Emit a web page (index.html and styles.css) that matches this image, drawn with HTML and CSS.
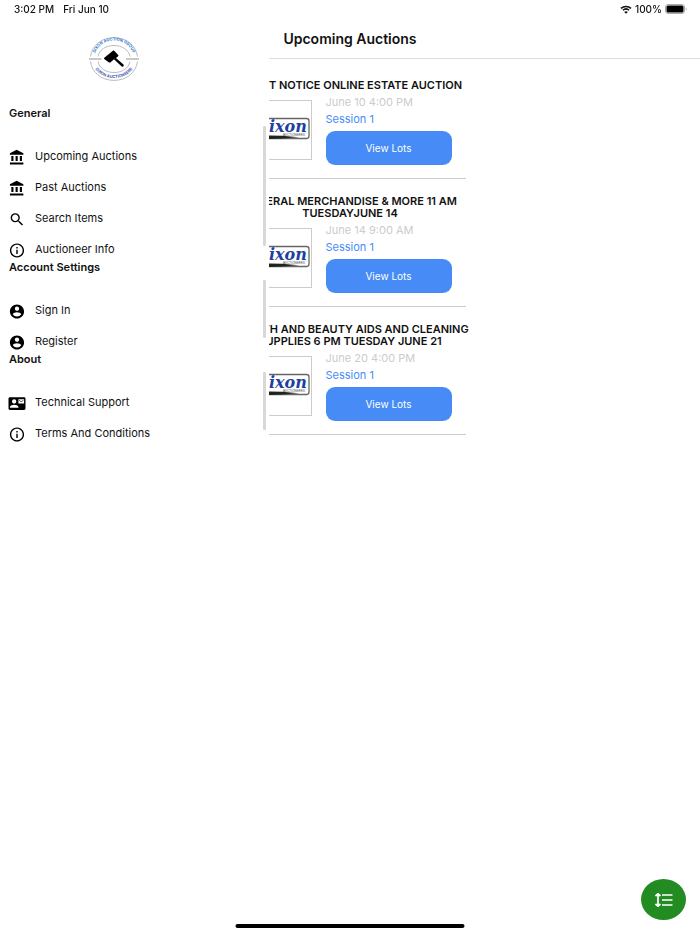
FILE: index.html
```html
<!DOCTYPE html>
<html lang="en">
  <head>
    <meta charset="UTF-8" />
    <title>Upcoming Auctions</title>
    <meta name="viewport" content="width=device-width, initial-scale=1.0" />
    <link rel="stylesheet" href="styles.css">
  </head>
  <body>
    <!-- shared icons -->
    <svg class="sprite" aria-hidden="true">
      <symbol id="icon-bank" viewBox="0 0 24 24">
        <path d="M4 10v7h3v-7H4zm6 0v7h3v-7h-3zM2 22h19v-3H2v3zm14-12v7h3v-7h-3zM11.500 1L2 6v2h19V6l-9.500-5z" />
      </symbol>
      <symbol id="icon-search" viewBox="0 0 24 24">
        <path d="M15.500 14h-.79l-.28-.27A6.470 6.470 0 0 0 16 9.500 6.500 6.500 0 1 0 9.500 16c1.610 0 3.090-.59 4.230-1.570l.27.28v.79l5 4.990L20.490 19l-4.990-5zm-6 0C7.010 14 5 11.990 5 9.500S7.010 5 9.500 5 14 7.010 14 9.500 11.990 14 9.500 14z" />
      </symbol>
      <symbol id="icon-info" viewBox="0 0 24 24">
        <path d="M11 7h2v2h-2zm0 4h2v6h-2zm1-9C6.480 2 2 6.480 2 12s4.480 10 10 10 10-4.480 10-10S17.520 2 12 2zm0 18c-4.410 0-8-3.590-8-8s3.590-8 8-8 8 3.590 8 8-3.590 8-8 8z" />
      </symbol>
      <symbol id="icon-account" viewBox="0 0 24 24">
        <path d="M12 2C6.480 2 2 6.480 2 12s4.480 10 10 10 10-4.480 10-10S17.520 2 12 2zm0 3c1.660 0 3 1.340 3 3s-1.340 3-3 3-3-1.340-3-3 1.340-3 3-3zm0 14.200a7.200 7.200 0 0 1-6-3.220c.03-1.990 4-3.080 6-3.080 1.990 0 5.970 1.090 6 3.080a7.200 7.200 0 0 1-6 3.220z" />
      </symbol>
      <symbol id="icon-contact" viewBox="0 0 24 24">
        <path d="M22 3H2C.9 3 0 3.900 0 5v14c0 1.100.9 2 2 2h20c1.100 0 1.990-.9 1.990-2L24 5c0-1.100-.9-2-2-2zM8 6c1.660 0 3 1.340 3 3s-1.340 3-3 3-3-1.340-3-3 1.340-3 3-3zm6 12H2v-1c0-2 4-3.100 6-3.100s6 1.100 6 3.100v1zm8-6h-8V6h8v6zm-1-5l-3 2-3-2v1l3 2 3-2V7z" />
      </symbol>
      <symbol id="dixon-logo" viewBox="0 0 68 58">
        <rect x="1" y="17.500" width="65" height="20" rx="2.500" fill="#fff" stroke="#666" stroke-width="1.300" />
        <text x="12" y="31" class="dixon-name">Dixon</text>
        <text x="40" y="34.500" class="dixon-sub">AUCTIONEERS</text>
        <path d="M5 35.200l22-.7 12 .3 17 1.400-17 1.400-12 .3-22-.7z" fill="#222" />
      </symbol>
    </svg>

    <header class="status-bar">
      <div class="status-left">
        <span>3:02 PM</span>
        <span>Fri Jun 10</span>
      </div>
      <div class="status-right">
        <svg class="wifi" viewBox="0 0 12 9" aria-hidden="true">
          <path d="M1 3.400a7.300 7.300 0 0 1 10 0M2.900 5.300a4.600 4.600 0 0 1 6.200 0" fill="none" stroke="#111" stroke-width="1.500" />
          <path d="M6 8.800L4.200 7a2.600 2.600 0 0 1 3.600 0z" fill="#111" />
        </svg>
        <span>100%</span>
        <svg class="battery" viewBox="0 0 22 10" aria-hidden="true">
          <rect x="0.500" y="0.500" width="19" height="9" rx="2.500" fill="#fff" stroke="#aaa" />
          <rect x="1.500" y="1.500" width="17" height="7" rx="1.500" fill="#000" />
          <path d="M20.800 3.500v3c1-.4 1-2.600 0-3z" fill="#999" />
        </svg>
      </div>
    </header>

    <aside class="drawer">
      <svg class="brand" viewBox="0 0 50 44" role="img" aria-label="Dixon Auction Group">
        <g fill="none" stroke="#aaa" stroke-width="0.800">
          <path d="M1.500 19.500C3 8 13 .6 25 .6S47 8 48.500 19.500" />
          <path d="M1.500 24.500C3 36 13 43.400 25 43.400S47 36 48.500 24.500" />
          <path d="M9 19.500C10.500 12.500 17 8.500 25 8.500s14.500 4 16 11" />
          <path d="M9 24.500C10.500 31.500 17 35.500 25 35.500s14.500-4 16-11" />
          <path d="M0 22h12.500M37 22h13" stroke="#777" />
        </g>
        <path id="arc-top" d="M5.500 21A19.500 17.500 0 0 1 44.500 21" fill="none" />
        <path id="arc-bottom" d="M3.500 23A21.500 18 0 0 0 46.500 23" fill="none" />
        <text class="brand-top" text-anchor="middle"><textPath href="#arc-top" startOffset="50%">DIXON AUCTION GROUP</textPath></text>
        <text class="brand-bottom" text-anchor="middle"><textPath href="#arc-bottom" startOffset="50%">DIXON AUCTIONEERS</textPath></text>
        <path d="M15 21l9.500-7.800 1.200 1 2.800 3 1 1-.8 1.500-1.800 1.300 7.300 6.200c1.500 1.400-.3 3.400-1.800 2l-7.400-7-3.700 3.200-1.300.2-4.800-3.600z" fill="#000" />
      </svg>

      <nav class="menu">
        <h2 class="menu-title">General</h2>
        <ul class="menu-list">
          <li><a href="#upcoming"><svg class="icon"><use href="#icon-bank" /></svg>Upcoming Auctions</a></li>
          <li><a href="#past"><svg class="icon"><use href="#icon-bank" /></svg>Past Auctions</a></li>
          <li><a href="#search"><svg class="icon"><use href="#icon-search" /></svg>Search Items</a></li>
          <li><a href="#info"><svg class="icon"><use href="#icon-info" /></svg>Auctioneer Info</a></li>
        </ul>

        <h2 class="menu-title">Account Settings</h2>
        <ul class="menu-list">
          <li><a href="#signin"><svg class="icon"><use href="#icon-account" /></svg>Sign In</a></li>
          <li><a href="#register"><svg class="icon"><use href="#icon-account" /></svg>Register</a></li>
        </ul>

        <h2 class="menu-title">About</h2>
        <ul class="menu-list">
          <li><a href="#support"><svg class="icon"><use href="#icon-contact" /></svg>Technical Support</a></li>
          <li><a href="#terms"><svg class="icon"><use href="#icon-info" /></svg>Terms And Conditions</a></li>
        </ul>
      </nav>
    </aside>

    <main class="page">
      <h1 class="page-title">Upcoming Auctions</h1>

      <div class="auction-list">
        <article class="auction">
          <h2 class="auction-title">SHORT NOTICE ONLINE ESTATE AUCTION</h2>
          <div class="auction-body">
            <div class="thumb"><svg><use href="#dixon-logo" /></svg></div>
            <div class="details">
              <p class="date">June 10 4:00 PM</p>
              <p class="session">Session 1</p>
              <button type="button" class="view-btn">View Lots</button>
            </div>
          </div>
        </article>

        <article class="auction">
          <h2 class="auction-title">GENERAL MERCHANDISE &amp; MORE 11 AM<br />TUESDAYJUNE 14</h2>
          <div class="auction-body">
            <div class="thumb"><svg><use href="#dixon-logo" /></svg></div>
            <div class="details">
              <p class="date">June 14 9:00 AM</p>
              <p class="session">Session 1</p>
              <button type="button" class="view-btn">View Lots</button>
            </div>
          </div>
        </article>

        <article class="auction">
          <h2 class="auction-title">HEALTH AND BEAUTY AIDS AND CLEANING<br />SUPPLIES 6 PM TUESDAY JUNE 21</h2>
          <div class="auction-body">
            <div class="thumb"><svg><use href="#dixon-logo" /></svg></div>
            <div class="details">
              <p class="date">June 20 4:00 PM</p>
              <p class="session">Session 1</p>
              <button type="button" class="view-btn">View Lots</button>
            </div>
          </div>
        </article>
      </div>
    </main>

    <button type="button" class="fab" aria-label="Sort">
      <svg viewBox="0 0 18 14" fill="none" stroke="#fff" stroke-width="1.700" aria-hidden="true">
        <path d="M3 1v12M.5 3L3 .8 5.500 3M.5 11L3 13.200 5.500 11M7 2h10.500M7 7h10.500M7 12h10.500" />
      </svg>
    </button>
    <div class="home-indicator"></div>
  </body>
</html>
```

FILE: styles.css
```css
* {
  box-sizing: border-box;
}
body {
  margin: 0;
  min-height: 100vh;
  font-family: Inter, "Liberation Sans", sans-serif;
  font-size: 11px;
  color: #111;
  background-color: #fff;
}
h1,
h2,
p,
ul {
  margin: 0;
  padding: 0;
}
.sprite {
  position: absolute;
  width: 0;
  height: 0;
}

/* status bar */
.status-bar {
  position: relative;
  z-index: 3;
  display: flex;
  justify-content: space-between;
  align-items: center;
  height: 18px;
  padding: 0 13px 0 14px;
  font-size: 10px;
  font-weight: 500;
}
.status-left {
  display: flex;
  gap: 9px;
}
.status-right {
  display: flex;
  align-items: center;
  gap: 3px;
}
.wifi {
  width: 12px;
  height: 9px;
}
.battery {
  width: 22px;
  height: 10px;
}

/* drawer lies over the page */
.drawer {
  position: fixed;
  top: 0;
  bottom: 0;
  left: 0;
  z-index: 2;
  width: 269px;
  padding-top: 37px;
  background-color: #fff;
}
.brand {
  display: block;
  width: 50px;
  height: 44px;
  margin: 0 0 24px 89px;
  overflow: visible;
}
.brand text {
  font-size: 4px;
  font-weight: 700;
}
.brand-top {
  fill: #2878d0;
}
.brand-bottom {
  fill: #3a52b4;
}
.menu-title {
  padding-left: 9px;
  font-size: 11px;
  font-weight: 600;
  line-height: 16px;
}
.menu-list {
  position: relative;
  display: flex;
  flex-direction: column;
  gap: 13px;
  padding: 26px 0 1px 8px;
  list-style: none;
}
/* scroll thumb */
.menu-list::after {
  content: "";
  position: absolute;
  top: 5px;
  right: 3px;
  bottom: 13px;
  width: 3px;
  border-radius: 1px;
  background-color: #d8d8d8;
}
.menu-list a {
  display: flex;
  align-items: center;
  gap: 9px;
  height: 18px;
  font-size: 11px;
  line-height: 18px;
  color: #111;
  text-decoration: none;
}
.icon {
  width: 18px;
  height: 17px;
  margin-top: 2px;
  fill: #000;
}

/* page */
.page-title {
  height: 41px;
  border-bottom: 1px solid #ddd;
  font-size: 14px;
  font-weight: 600;
  line-height: 41px;
  text-align: center;
}
.auction-list {
  width: 33%;
  min-width: 231px;
  margin: 0 auto;
  padding-top: 4px;
}
.auction {
  padding: 16px 0 13px;
  border-bottom: 1px solid #ccc;
}
.auction-title {
  font-size: 11px;
  font-weight: 600;
  line-height: 12px;
  text-align: center;
  white-space: nowrap;
}
.auction-body {
  display: flex;
  gap: 14px;
  padding: 3px 14px 0 7px;
}
.thumb {
  width: 70px;
  height: 60px;
  margin-top: 6px;
  border: 1px solid #ccc;
}
.thumb svg {
  display: block;
  width: 68px;
  height: 58px;
}
.dixon-name {
  font-family: "DejaVu Serif", serif;
  font-size: 16px;
  font-style: italic;
  font-weight: 700;
  fill: #1f3fa0;
}
.dixon-sub {
  font-family: "Liberation Sans", sans-serif;
  font-size: 3px;
  fill: #444;
}
.details {
  flex: 1;
  line-height: 17px;
}
.date {
  color: #ccc;
}
.session {
  color: #478bf7;
}
.view-btn {
  display: block;
  width: 100%;
  height: 34px;
  margin-top: 3px;
  border: none;
  border-radius: 9px;
  font-family: inherit;
  font-size: 10px;
  color: #fff;
  background-color: #478bf7;
  cursor: pointer;
}

.fab {
  position: fixed;
  right: 14px;
  bottom: 14px;
  display: flex;
  align-items: center;
  justify-content: center;
  width: 45px;
  height: 41px;
  padding: 0;
  border: none;
  border-radius: 50%;
  background-color: #228b22;
  cursor: pointer;
}
.fab svg {
  width: 18px;
  height: 14px;
}
.home-indicator {
  position: fixed;
  bottom: 6px;
  left: 50%;
  z-index: 3;
  width: 229px;
  height: 4px;
  border-radius: 2px;
  background-color: #000;
  transform: translateX(-50%);
}
```
